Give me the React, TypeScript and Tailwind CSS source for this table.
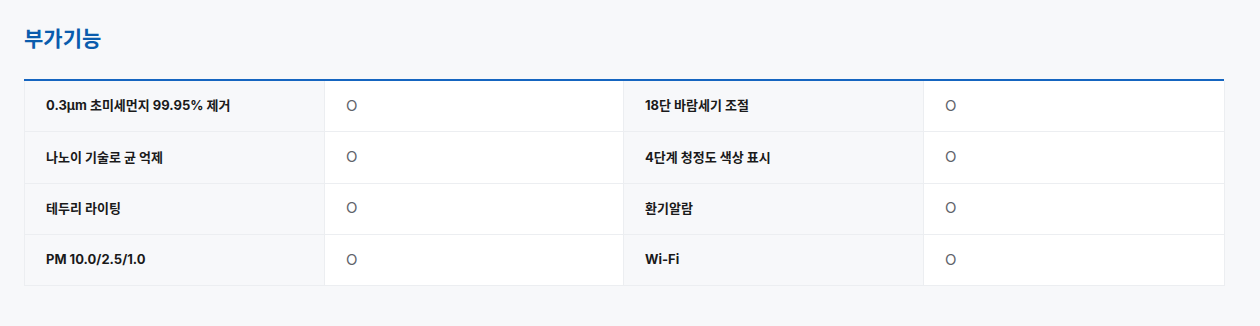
const rows = [
  ["0.3µm 초미세먼지 99.95% 제거", "O", "18단 바람세기 조절", "O"],
  ["나노이 기술로 균 억제", "O", "4단계 청정도 색상 표시", "O"],
  ["테두리 라이팅", "O", "환기알람", "O"],
  ["PM 10.0/2.5/1.0", "O", "Wi-Fi", "O"],
];

const font = {
  fontFamily: '"Inter", "Noto Sans CJK KR", sans-serif',
};

export default function App() {
  return (
    <div className="min-h-[326px] w-full bg-[#f7f8fa] pt-[25px]" style={font}>
      <div className="ml-6 w-[1200px]">
        <h2 className="text-[21px] font-bold leading-[28px] text-[#0a5cad]">
          부가기능
        </h2>
        {/* blue rule over the spec table */}
        <div className="mt-[26px] h-[2px] bg-[#1565c0]" />
        <div className="grid grid-cols-[300px_299px_300px_301px] border-l border-[#eceef1]">
          {rows.map((row, i) => (
            <div key={i} className="contents">
              {row.map((cell, j) => (
                <div
                  key={j}
                  className={`flex h-[51.25px] items-center border-b border-r border-[#eceef1] pl-[21px] ${
                    j % 2 === 0
                      ? "bg-[#f7f8fa] text-[13px] font-bold text-[#1a1a1a]"
                      : "bg-white text-[15px] text-[#5f646c]"
                  }`}
                >
                  {cell}
                </div>
              ))}
            </div>
          ))}
        </div>
      </div>
    </div>
  );
}
